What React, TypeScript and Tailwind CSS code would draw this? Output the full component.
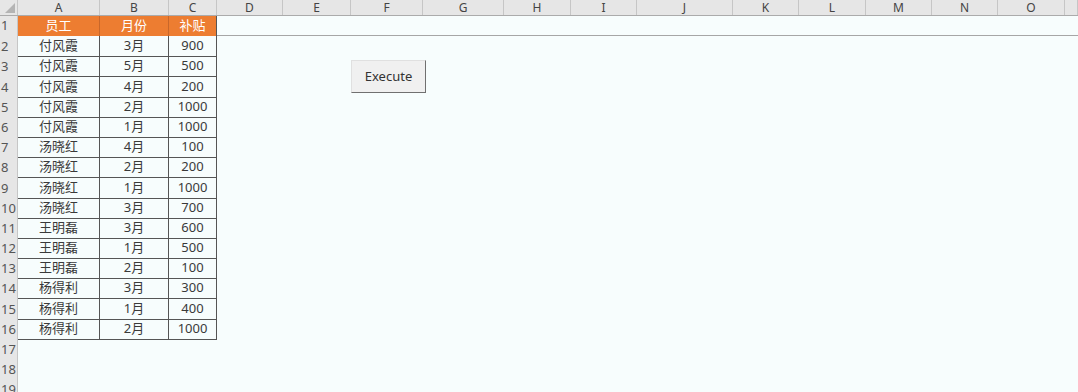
import React from "react";

const COLS = "grid grid-cols-[18px_82px_69px_48px_66px_68px_72px_81px_67px_66px_96px_66px_67px_66px_66px_67px_1fr]";
const LETTERS = ["A", "B", "C", "D", "E", "F", "G", "H", "I", "J", "K", "L", "M", "N", "O", ""];

const DATA: [string, string, string][] = [
  ["付风霞", "3月", "900"],
  ["付风霞", "5月", "500"],
  ["付风霞", "4月", "200"],
  ["付风霞", "2月", "1000"],
  ["付风霞", "1月", "1000"],
  ["汤晓红", "4月", "100"],
  ["汤晓红", "2月", "200"],
  ["汤晓红", "1月", "1000"],
  ["汤晓红", "3月", "700"],
  ["王明磊", "3月", "600"],
  ["王明磊", "1月", "500"],
  ["王明磊", "2月", "100"],
  ["杨得利", "3月", "300"],
  ["杨得利", "1月", "400"],
  ["杨得利", "2月", "1000"],
];

const TALL = new Set([3, 8, 14]);

function RowHeader({ n }: { n: number }) {
  return (
    <div className="bg-[#e6e6e6] border-r border-[#c6c6c6] text-[13px] leading-none text-[#555] pl-[1px] flex items-center overflow-hidden">
      {n}
    </div>
  );
}

export default function App() {
  const rows = [];
  for (let n = 2; n <= 19; n++) {
    const d = DATA[n - 2];
    const h = TALL.has(n) ? "h-[21px]" : "h-[20px]";
    rows.push(
      <div key={n} className={`${COLS} ${h}`}>
        <RowHeader n={n} />
        {d ? (
          <>
            <div className="border-r border-b border-[#555] flex items-center justify-center text-[#3a3a3a]">{d[0]}</div>
            <div className="border-r border-b border-[#555] flex items-center justify-center text-[#3a3a3a]">{d[1]}</div>
            <div className="border-r border-b border-[#555] flex items-center justify-center text-[#3a3a3a]">{d[2]}</div>
          </>
        ) : (
          <>
            <div />
            <div />
            <div />
          </>
        )}
        <div className="col-span-13" />
      </div>
    );
  }

  return (
    <div
      className="relative w-[1078px] h-[392px] overflow-hidden bg-[#f7fdfd] text-[13px]"
      style={{ fontFamily: '"Noto Sans", "Noto Sans CJK SC", sans-serif' }}
    >
      {/* column headers */}
      <div className={`${COLS} h-[16px] bg-[#e6e6e6] border-b border-[#ababab]`}>
        <div className="relative border-r border-[#c6c6c6]">
          <svg className="absolute right-[2px] bottom-[2px]" width="10" height="10" viewBox="0 0 10 10">
            <polygon points="10,0 10,10 0,10" fill="#b4b4b4" />
          </svg>
        </div>
        {LETTERS.map((l, i) => (
          <div
            key={i}
            className="border-r border-[#c6c6c6] flex items-center justify-center text-[12px] leading-[15px] text-[#444]"
          >
            {l}
          </div>
        ))}
      </div>

      {/* row 1 */}
      <div className={`${COLS} h-[20px] border-b border-[#a6a6a6]`}>
        <RowHeader n={1} />
        <div className="bg-[#ed7d31] border-r border-[#c8672a] flex items-center justify-center text-white">员工</div>
        <div className="bg-[#ed7d31] border-r border-[#c8672a] flex items-center justify-center text-white">月份</div>
        <div className="bg-[#ed7d31] border-r border-[#555] flex items-center justify-center text-white">补贴</div>
        <div className="col-span-13" />
      </div>

      {rows}

      <button
        className="absolute left-[351px] top-[60px] w-[75px] h-[33px] bg-[#f0f0f0] border border-[#e0e0e0] border-r-[#707070] border-b-[#707070] text-[13px] text-[#333] flex items-center justify-center"
        style={{ fontFamily: '"Noto Sans", sans-serif' }}
      >
        Execute
      </button>
    </div>
  );
}
